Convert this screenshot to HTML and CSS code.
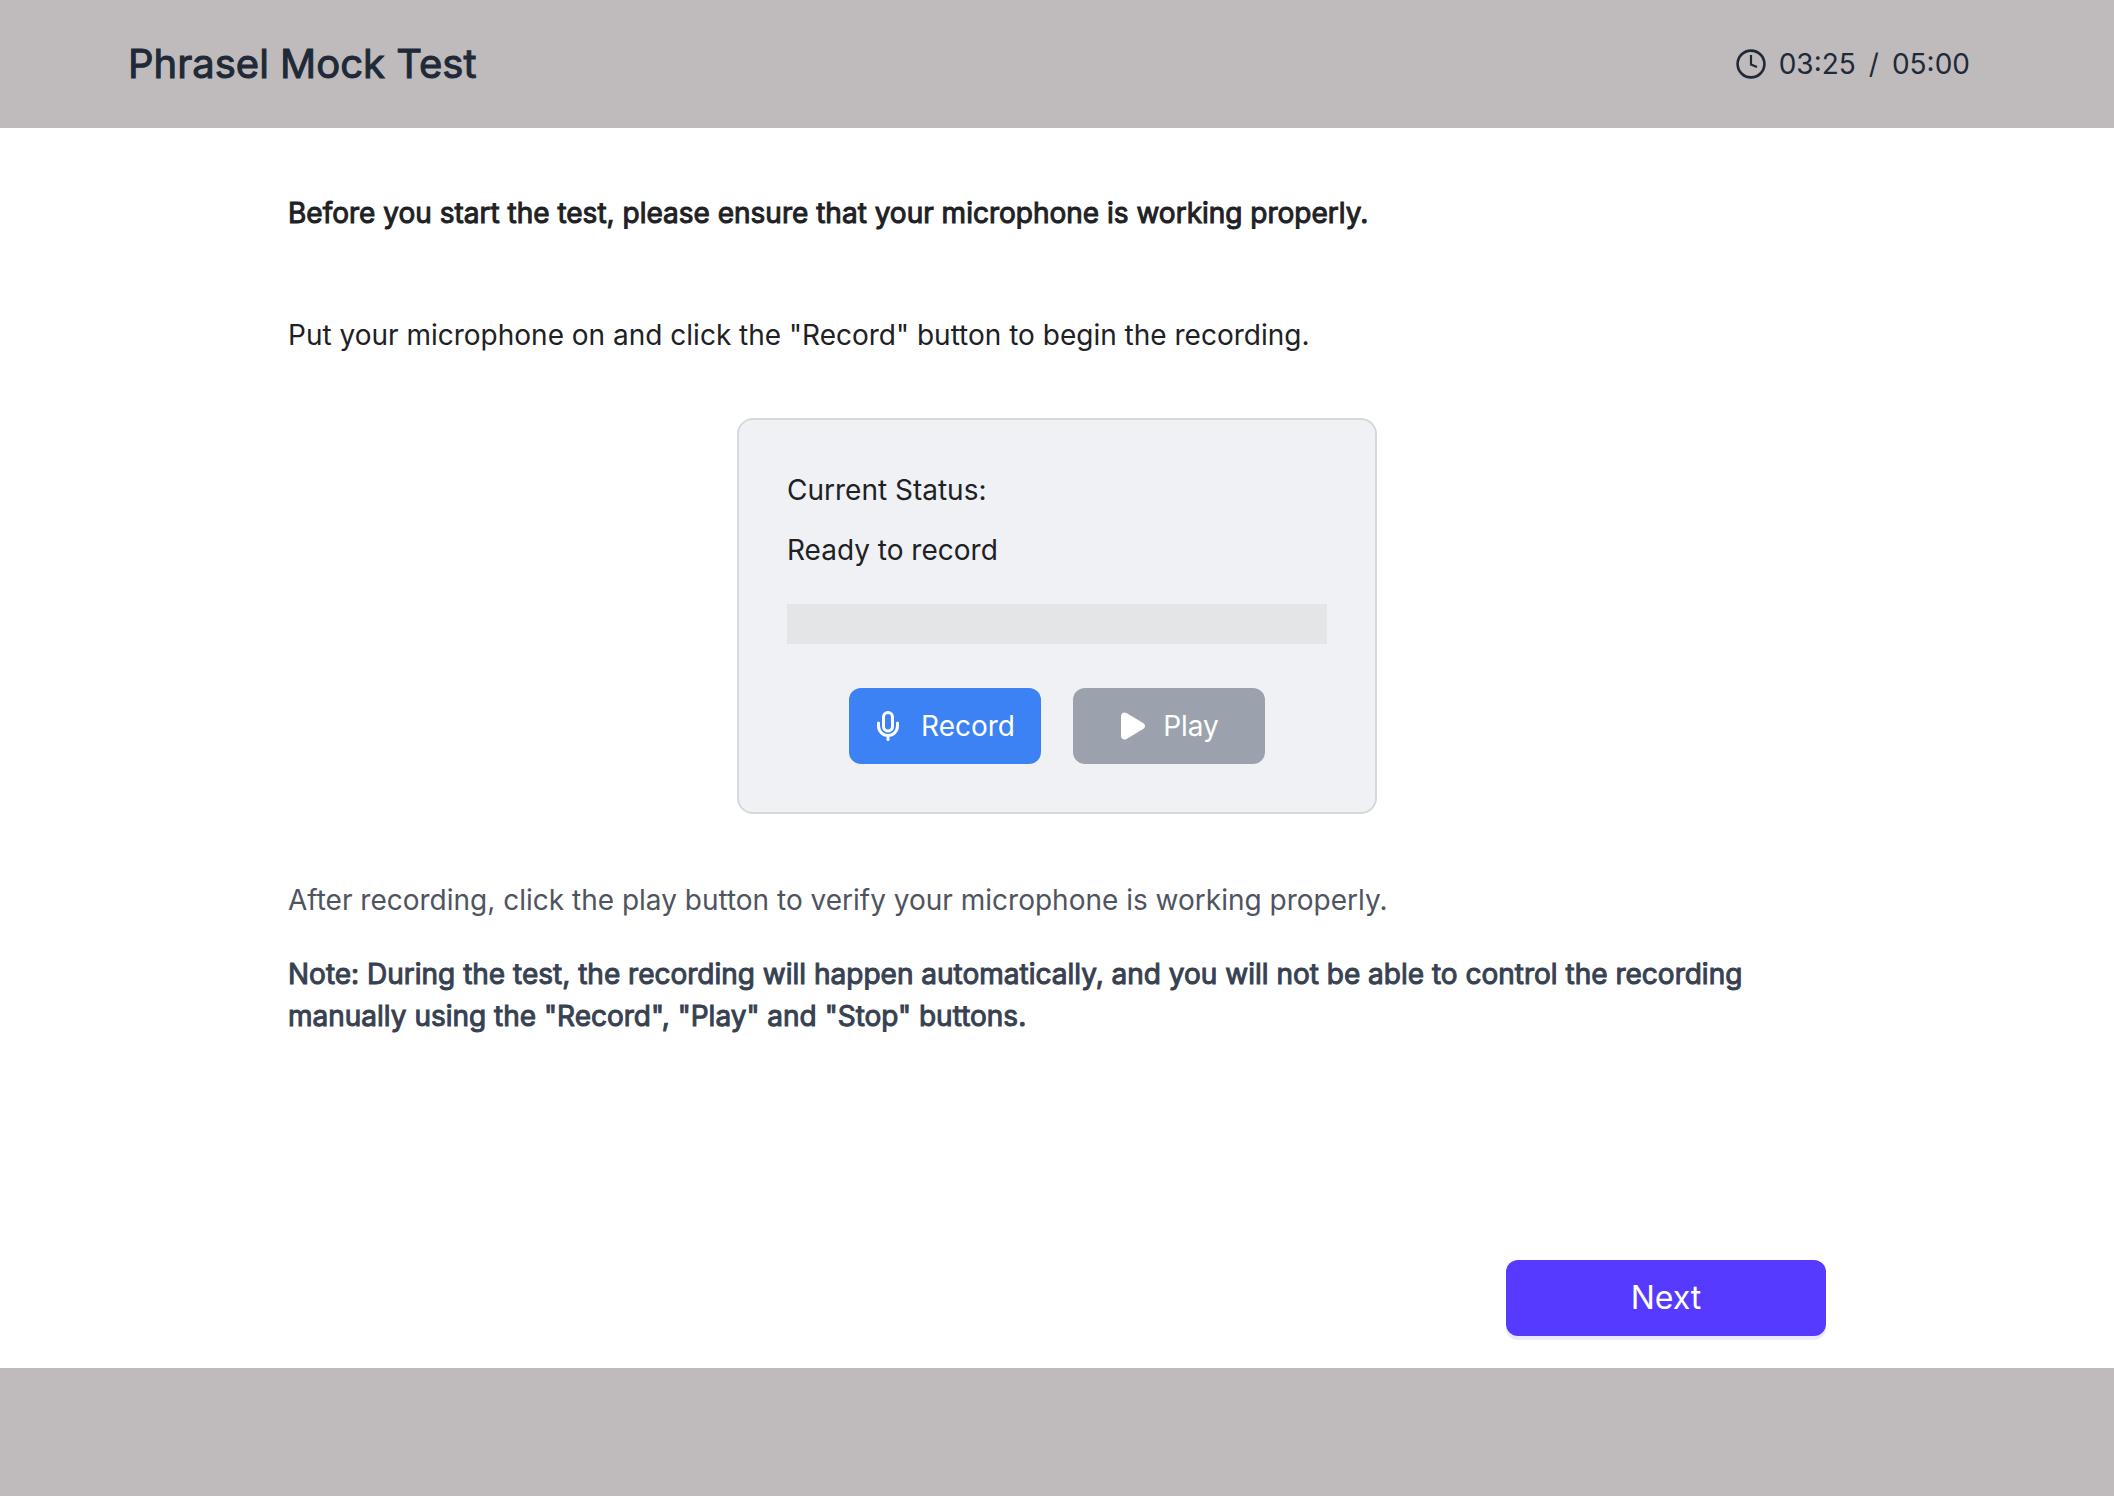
FILE: index.html
```
<!DOCTYPE html>
<html lang="en">
<head>
  <meta charset="UTF-8">
  <meta name="viewport" content="width=device-width, initial-scale=1">
  <title>Phrasel Mock Test</title>
  <link rel="stylesheet" href="styles.css">
</head>
<body>
  <header class="topbar">
    <h1 class="title">Phrasel Mock Test</h1>
    <div class="timer">
      <svg class="timer-icon" viewBox="0 0 30 30" fill="none" stroke="currentColor" stroke-width="2.6">
        <circle cx="15" cy="15" r="13.4"/>
        <path d="M15 6v9.5l6 2.5" stroke-width="2.2"/>
      </svg>
      <span>03:25</span>
      <span>/</span>
      <span>05:00</span>
    </div>
  </header>

  <main class="content">
    <h2 class="lead">Before you start the test, please ensure that your microphone is working properly.</h2>
    <p class="instruction">Put your microphone on and click the "Record" button to begin the recording.</p>

    <section class="recorder">
      <p class="status">Current Status:</p>
      <p class="status">Ready to record</p>
      <div class="progress"></div>
      <div class="controls">
        <button type="button" class="btn btn-record">
          <svg class="icon-mic" viewBox="0 0 22 30" fill="none" stroke="currentColor" stroke-width="3" stroke-linecap="round">
            <rect x="6.5" y="1.5" width="9" height="18.5" rx="4.5"/>
            <path d="M1.5 12v3a9.5 9.5 0 0 0 19 0v-3M11 24.5v4"/>
          </svg>
          Record
        </button>
        <button type="button" class="btn btn-play" disabled>
          <svg class="icon-play" viewBox="0 0 24 28" fill="currentColor">
            <path d="M0 4C0 1 3 -.5 5.5 1L22.5 11.2Q24 12.2 24 14Q24 15.8 22.5 16.8L5.5 27C3 28.5 0 27 0 24Z"/>
          </svg>
          Play
        </button>
      </div>
    </section>

    <p class="hint">After recording, click the play button to verify your microphone is working properly.</p>
    <p class="note">Note: During the test, the recording will happen automatically, and you will not be able to control the recording manually using the "Record", "Play" and "Stop" buttons.</p>

    <button type="button" class="btn btn-next">Next</button>
  </main>

  <footer class="bottombar"></footer>
</body>
</html>
```
FILE: styles.css
```
:root {
  --bar: #bfbbbc;
  --ink: #1f2937;
  --text: #202124;
}

* {
  box-sizing: border-box;
}

body {
  margin: 0;
  min-height: 100vh;
  display: flex;
  flex-direction: column;
  background: #fff;
  color: var(--text);
  font-family: Inter, "Liberation Sans", sans-serif;
  font-size: 28px;
  line-height: 42px;
}

h1, h2, p {
  margin: 0;
}

.topbar {
  height: 128px;
  padding: 0 144px 0 128px;
  display: flex;
  align-items: center;
  justify-content: space-between;
  background: var(--bar);
  color: var(--ink);
}

.title {
  font-size: 40px;
  font-weight: 400;
  -webkit-text-stroke: 1px currentColor;
}

.timer {
  display: flex;
  align-items: center;
  gap: 13px;
}

.timer-icon {
  width: 30px;
  height: 30px;
}

.content {
  flex: 1;
  display: flex;
  flex-direction: column;
  padding: 64px 288px 32px;
}

.lead,
.note {
  font-size: 28px;
  font-weight: 400;
  -webkit-text-stroke: 1px currentColor;
}

.instruction {
  margin: 80px 0 62px;
}

.recorder {
  align-self: center;
  width: 100%;
  max-width: 640px;
  padding: 48px;
  border: 2px solid #d6d8da;
  border-radius: 16px;
  background: #f0f1f5;
}

.status {
  margin-bottom: 16px;
  line-height: 44px;
}

.progress {
  height: 40px;
  margin: 32px 0 44px;
  background: #e4e5e7;
}

.controls {
  display: flex;
  justify-content: center;
  gap: 32px;
}

.btn {
  height: 76px;
  display: flex;
  align-items: center;
  justify-content: center;
  border: none;
  border-radius: 12px;
  color: #fff;
  font: inherit;
  cursor: pointer;
}

.btn-record,
.btn-play {
  width: 192px;
  padding: 0 6px 0 8px;
}

.btn-record {
  gap: 22px;
  background: #3c82f5;
}

.btn-play {
  gap: 18px;
  background: #9ba2ae;
  cursor: not-allowed;
}

.icon-mic {
  width: 22px;
  height: 30px;
}

.icon-play {
  width: 24px;
  height: 28px;
}

.hint {
  margin: 65px 0 32px;
  color: #4f5460;
}

.note {
  color: #374151;
}

.btn-next {
  width: 320px;
  margin-top: auto;
  align-self: flex-end;
  background: #573aff;
  font-size: 32px;
  box-shadow: 0 4px 0 #ebe8ff;
}

.bottombar {
  height: 128px;
  background: var(--bar);
}
```
